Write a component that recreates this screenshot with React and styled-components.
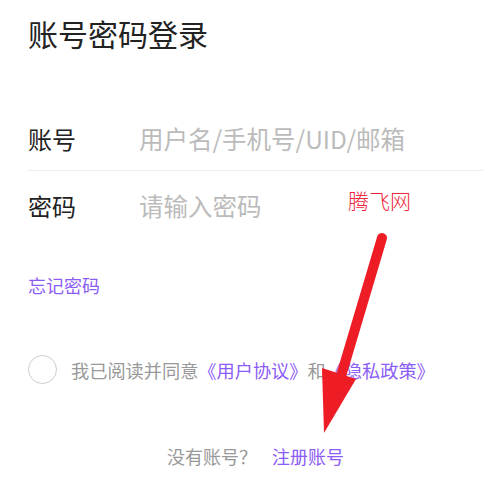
import styled, { createGlobalStyle } from 'styled-components';

const GlobalStyle = createGlobalStyle`
  html, body {
    margin: 0;
    padding: 0;
    background: #fff;
  }
  body {
    font-family: "Noto Sans CJK SC", "Noto Sans", sans-serif;
  }
`;

const App = () => {
  return (
    <Page>
      <GlobalStyle />
      <Title>账号密码登录</Title>
      <Form>
        <Row height={64}>
          <Label>账号</Label>
          <Input placeholder='用户名/手机号/UID/邮箱' />
        </Row>
        <Divider />
        <Row height={68}>
          <Label>密码</Label>
          <Input type='password' placeholder='请输入密码' />
        </Row>
      </Form>
      <Forgot>忘记密码</Forgot>
      <Agree>
        <Radio />
        <AgreeText>
          我已阅读并同意<Link>《用户协议》</Link>和<Link>《隐私政策》</Link>
        </AgreeText>
      </Agree>
      <Register>
        <span>没有账号？</span>
        <Link>注册账号</Link>
      </Register>
      <Watermark>腾飞网</Watermark>
      <Arrow viewBox='0 0 493 494' width='493' height='494'>
        <line x1='382' y1='238' x2='341' y2='376' stroke='#ee1c25' strokeWidth='10' strokeLinecap='round' />
        <polygon points='322,368 356,379 324,433' fill='#ee1c25' />
      </Arrow>
    </Page>
  );
};

const Page = styled.div`
  position: relative;
  width: 493px;
  height: 494px;
  box-sizing: border-box;
  padding: 17px 10px 0 28px;
  overflow: hidden;
`;

const Title = styled.h1`
  margin: 0;
  font-size: 30px;
  line-height: 32px;
  font-weight: 400;
  color: #222;
`;

const Form = styled.div`
  margin-top: 57px;
  margin-left: -1px;
`;

const Row = styled.div`
  display: flex;
  align-items: center;
  height: ${(p) => p.height}px;
`;

const Label = styled.div`
  width: 111px;
  padding-left: 1px;
  font-size: 24px;
  color: #222;
`;

const Input = styled.input`
  flex: 1;
  border: none;
  outline: none;
  padding: 0;
  font-family: inherit;
  font-size: 24.5px;
  color: #222;
  background: transparent;
  &::placeholder {
    color: #bbb;
  }
`;

const Divider = styled.div`
  height: 1px;
  background: #eee;
`;

const Forgot = styled.div`
  margin-top: 34px;
  font-size: 18px;
  line-height: 24px;
  color: #8b5cf6;
`;

const Agree = styled.div`
  display: flex;
  align-items: center;
  gap: 14px;
  margin-top: 58px;
`;

const Radio = styled.div`
  width: 29px;
  height: 29px;
  box-sizing: border-box;
  border: 1.5px solid #ccc;
  border-radius: 50%;
`;

const AgreeText = styled.div`
  font-size: 18.2px;
  color: #999;
`;

const Link = styled.span`
  color: #8b5cf6;
`;

const Register = styled.div`
  display: flex;
  justify-content: center;
  gap: 15px;
  margin-top: 59px;
  font-size: 18px;
  color: #999;
`;

const Watermark = styled.div`
  position: absolute;
  left: 348px;
  top: 186px;
  font-size: 21px;
  line-height: 28px;
  font-weight: 300;
  color: #f0283c;
`;

const Arrow = styled.svg`
  position: absolute;
  left: 0;
  top: 0;
  pointer-events: none;
`;

export default App;
